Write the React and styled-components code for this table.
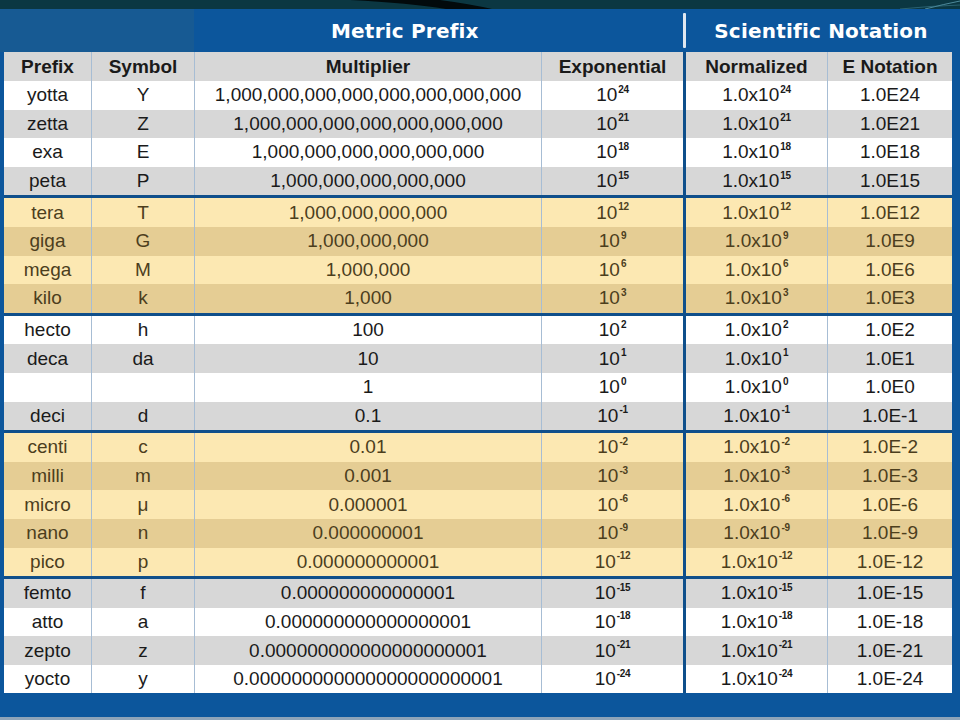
import React from 'react';
import styled, { createGlobalStyle } from 'styled-components';

const GlobalStyle = createGlobalStyle`
  html, body {
    margin: 0;
    padding: 0;
  }
  body {
    background: #0c569c;
    font-family: "Liberation Sans", Arial, sans-serif;
  }
`;

const COLS = '87px 103px 347px 142px 144px 125px';

const Slide = styled.div`
  width: 960px;
  height: 720px;
  display: flex;
  flex-direction: column;
  background: #0c569c;
  overflow: hidden;
`;

const TopStrip = styled.svg`
  display: block;
  flex: none;
`;

const Band = styled.div`
  display: grid;
  grid-template-columns: 194px 489px 3px 1fr;
  height: 43px;
  flex: none;
`;

const BandBlank = styled.div`
  background: #175a93;
`;

const BandTitle = styled.div`
  display: flex;
  align-items: center;
  justify-content: ${p => (p.$center ? 'center' : 'flex-start')};
  padding-left: ${p => p.$padLeft || 0}px;
  padding-right: ${p => p.$padRight || 0}px;
  color: #ffffff;
  font-family: "DejaVu Sans", Verdana, sans-serif;
  font-weight: 700;
  font-size: ${p => p.$size || 19.5}px;
  letter-spacing: 0.2px;
`;

const BandDivider = styled.div`
  margin: 4px 0;
  background: #dfe7f0;
  border-radius: 1px;
`;

const Table = styled.div`
  width: 948px;
  margin-left: 4px;
  flex: none;
  background: #fff;
`;

const Group = styled.div`
  border-top: ${p => (p.$divided ? '3px solid #0f4f8b' : 'none')};
`;

const rowColors = {
  white: { bg: '#ffffff', fg: '#1a1a1a' },
  gray: { bg: '#d7d7d7', fg: '#1a1a1a' },
  light: { bg: '#fce8b2', fg: '#4c3e1d' },
  tan: { bg: '#e5cd94', fg: '#4c3e1d' },
};

const Row = styled.div`
  display: grid;
  grid-template-columns: ${COLS};
  height: ${p => (p.$head ? 29 : 28.6)}px;
  background: ${p => rowColors[p.$tone].bg};
  color: ${p => rowColors[p.$tone].fg};
  font-size: 19px;
  font-weight: ${p => (p.$head ? 700 : 400)};
`;

const Cell = styled.div`
  display: flex;
  align-items: center;
  justify-content: center;
  white-space: nowrap;
  border-left: ${p =>
    p.$first ? 'none' : p.$thick ? '3px solid #0f4f8b' : '1px solid #a7bdd4'};
`;

const Sup = styled.span`
  font-size: 10px;
  font-weight: 700;
  letter-spacing: -0.3px;
  position: relative;
  top: -6px;
  margin-left: 1px;
`;

const Footer = styled.div`
  flex: 1;
  background: #0c569c;
  border-bottom: 3px solid #8ea4b9;
`;

const groups = [
  {
    tones: ['white', 'gray'],
    rows: [
      ['yotta', 'Y', '1,000,000,000,000,000,000,000,000', '24'],
      ['zetta', 'Z', '1,000,000,000,000,000,000,000', '21'],
      ['exa', 'E', '1,000,000,000,000,000,000', '18'],
      ['peta', 'P', '1,000,000,000,000,000', '15'],
    ],
  },
  {
    tones: ['light', 'tan'],
    rows: [
      ['tera', 'T', '1,000,000,000,000', '12'],
      ['giga', 'G', '1,000,000,000', '9'],
      ['mega', 'M', '1,000,000', '6'],
      ['kilo', 'k', '1,000', '3'],
    ],
  },
  {
    tones: ['white', 'gray'],
    rows: [
      ['hecto', 'h', '100', '2'],
      ['deca', 'da', '10', '1'],
      ['', '', '1', '0'],
      ['deci', 'd', '0.1', '-1'],
    ],
  },
  {
    tones: ['light', 'tan'],
    rows: [
      ['centi', 'c', '0.01', '-2'],
      ['milli', 'm', '0.001', '-3'],
      ['micro', 'μ', '0.000001', '-6'],
      ['nano', 'n', '0.000000001', '-9'],
      ['pico', 'p', '0.000000000001', '-12'],
    ],
  },
  {
    tones: ['gray', 'white'],
    rows: [
      ['femto', 'f', '0.000000000000001', '-15'],
      ['atto', 'a', '0.000000000000000001', '-18'],
      ['zepto', 'z', '0.000000000000000000001', '-21'],
      ['yocto', 'y', '0.000000000000000000000001', '-24'],
    ],
  },
];

const App = () => {
  return (
    <>
      <GlobalStyle />
      <Slide>
        <TopStrip width="960" height="9" viewBox="0 0 960 9">
          <rect width="960" height="9" fill="#0b3742" />
          <path d="M350 0 L440 0 Q470 4 492 9 L446 9 Q410 3 350 0 Z" fill="#020a0c" />
          <path d="M925 9 Q945 4 960 1" stroke="#5f9fb2" strokeWidth="0.8" fill="none" />
          <path d="M900 9 Q930 6 960 5" stroke="#3f7f92" strokeWidth="0.6" fill="none" />
        </TopStrip>
        <Band>
          <BandBlank />
          <BandTitle $padLeft={137} $size={20}>Metric Prefix</BandTitle>
          <BandDivider />
          <BandTitle $center $padRight={4} $size={20}>Scientific Notation</BandTitle>
        </Band>
        <Table>
          <Row $head $tone="gray">
            <Cell $first>Prefix</Cell>
            <Cell>Symbol</Cell>
            <Cell>Multiplier</Cell>
            <Cell>Exponential</Cell>
            <Cell $thick>Normalized</Cell>
            <Cell>E Notation</Cell>
          </Row>
          {groups.map((group, gi) => (
            <Group key={gi} $divided={gi > 0}>
              {group.rows.map(([prefix, symbol, mult, exp], ri) => (
                <Row key={ri} $tone={group.tones[ri % 2]}>
                  <Cell $first>{prefix}</Cell>
                  <Cell>{symbol}</Cell>
                  <Cell>{mult}</Cell>
                  <Cell>
                    10<Sup>{exp}</Sup>
                  </Cell>
                  <Cell $thick>
                    1.0x10<Sup>{exp}</Sup>
                  </Cell>
                  <Cell>1.0E{exp}</Cell>
                </Row>
              ))}
            </Group>
          ))}
        </Table>
        <Footer />
      </Slide>
    </>
  );
};

export default App;
